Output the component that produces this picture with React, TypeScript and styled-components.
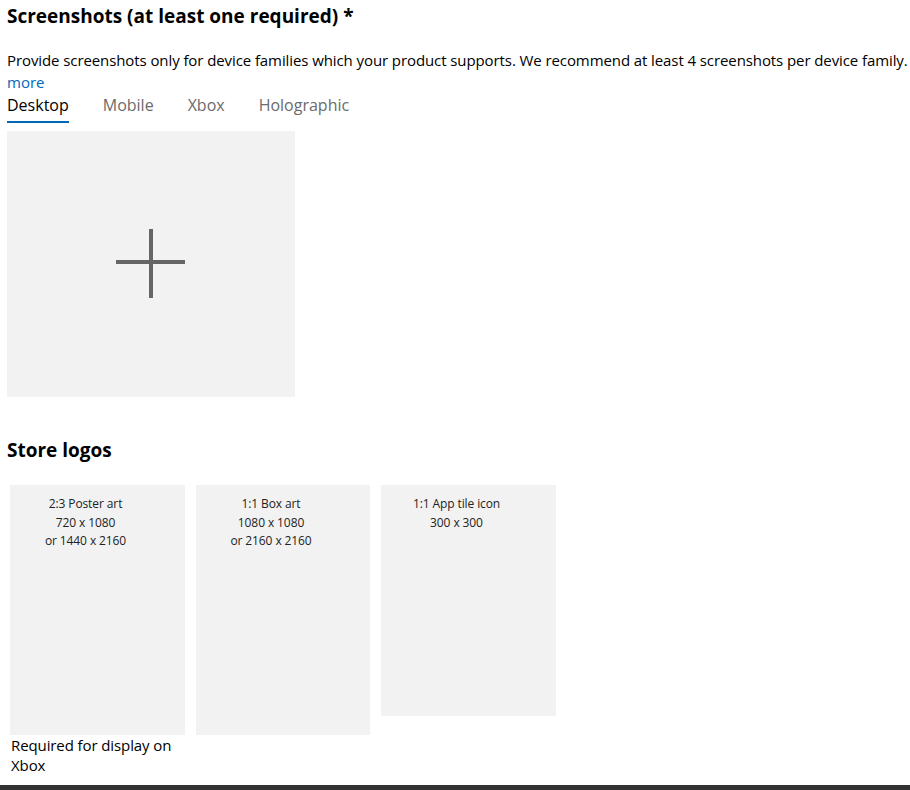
import React from "react";
import styled, { createGlobalStyle } from "styled-components";

const Global = createGlobalStyle`
  html, body { margin: 0; padding: 0; background: #fff; }
  body { font-family: "Segoe UI", "Open Sans", "Noto Sans", sans-serif; color: #000; }
`;

const Page = styled.div`
  width: 910px;
  height: 790px;
  display: flex;
  flex-direction: column;
  overflow: hidden;
`;

const Content = styled.div`
  flex: 1;
  padding: 0 0 0 7px;
  display: flex;
  flex-direction: column;
`;

const Heading = styled.h2`
  margin: 4px 0 0 0;
  font-size: 19px;
  line-height: 24px;
  font-weight: 700;
  letter-spacing: 0;
`;

const Description = styled.p`
  margin: 21px 0 0 0;
  font-size: 15px;
  line-height: 22px;
  letter-spacing: -0.09px;
  white-space: nowrap;
`;

const More = styled.a`
  display: block;
  color: #0067b8;
  font-size: 15px;
  line-height: 22px;
  text-decoration: none;
  cursor: pointer;
`;

const Tabs = styled.div`
  display: flex;
  gap: 34px;
  margin-top: 1px;
`;

const Tab = styled.button<{ $active?: boolean }>`
  background: none;
  border: none;
  padding: 0 0 5px 0;
  font-family: inherit;
  font-size: 16px;
  line-height: 22px;
  letter-spacing: 0;
  color: ${(p) => (p.$active ? "#000" : "#6b6b6b")};
  border-bottom: 2px solid ${(p) => (p.$active ? "#0067b8" : "transparent")};
  cursor: pointer;
`;

const AddBox = styled.div`
  margin-top: 8px;
  width: 288px;
  height: 266px;
  background: #f2f2f2;
  display: flex;
  align-items: center;
  justify-content: center;
`;

const SectionHeading = styled.h2`
  margin: 41px 0 0 0;
  font-size: 19px;
  line-height: 24px;
  font-weight: 700;
  letter-spacing: 0;
`;

const Logos = styled.div`
  display: flex;
  gap: 11px;
  margin-top: 23px;
  padding-left: 3px;
  align-items: flex-start;
`;

const LogoColumn = styled.div<{ $w: number }>`
  width: ${(p) => p.$w}px;
  display: flex;
  flex-direction: column;
`;

const LogoCard = styled.div<{ $h: number }>`
  height: ${(p) => p.$h}px;
  background: #f2f2f2;
  padding: 10px 24px 0 0;
  box-sizing: border-box;
  text-align: center;
  font-size: 12px;
  line-height: 18.5px;
  letter-spacing: -0.1px;
  color: #222;
`;

const Note = styled.div`
  margin-top: 0;
  padding-left: 1px;
  font-size: 15px;
  line-height: 20px;
  letter-spacing: -0.1px;
  color: #000;
`;

const BottomBar = styled.div`
  height: 5px;
  background: #333;
`;

const Plus = () => (
  <svg width="70" height="70" viewBox="0 0 70 70">
    <rect x="33" y="0" width="4" height="69" fill="#666" />
    <rect x="0" y="31" width="69" height="4" fill="#666" />
  </svg>
);

const logos = [
  { w: 175, h: 250, lines: ["2:3 Poster art", "720 x 1080", "or 1440 x 2160"], note: "Required for display on Xbox" },
  { w: 174, h: 250, lines: ["1:1 Box art", "1080 x 1080", "or 2160 x 2160"] },
  { w: 175, h: 231, lines: ["1:1 App tile icon", "300 x 300"] },
];

export default function App() {
  return (
    <Page>
      <Global />
      <Content>
        <Heading>Screenshots (at least one required) *</Heading>
        <Description>
          Provide screenshots only for device families which your product supports. We recommend at least 4 screenshots per device family.
        </Description>
        <More>more</More>
        <Tabs>
          <Tab $active>Desktop</Tab>
          <Tab>Mobile</Tab>
          <Tab>Xbox</Tab>
          <Tab>Holographic</Tab>
        </Tabs>
        <AddBox>
          <Plus />
        </AddBox>
        <SectionHeading>Store logos</SectionHeading>
        <Logos>
          {logos.map((l, i) => (
            <LogoColumn key={i} $w={l.w}>
              <LogoCard $h={l.h}>
                {l.lines.map((t, j) => (
                  <div key={j}>{t}</div>
                ))}
              </LogoCard>
              {l.note && <Note>{l.note}</Note>}
            </LogoColumn>
          ))}
        </Logos>
      </Content>
      <BottomBar />
    </Page>
  );
}
